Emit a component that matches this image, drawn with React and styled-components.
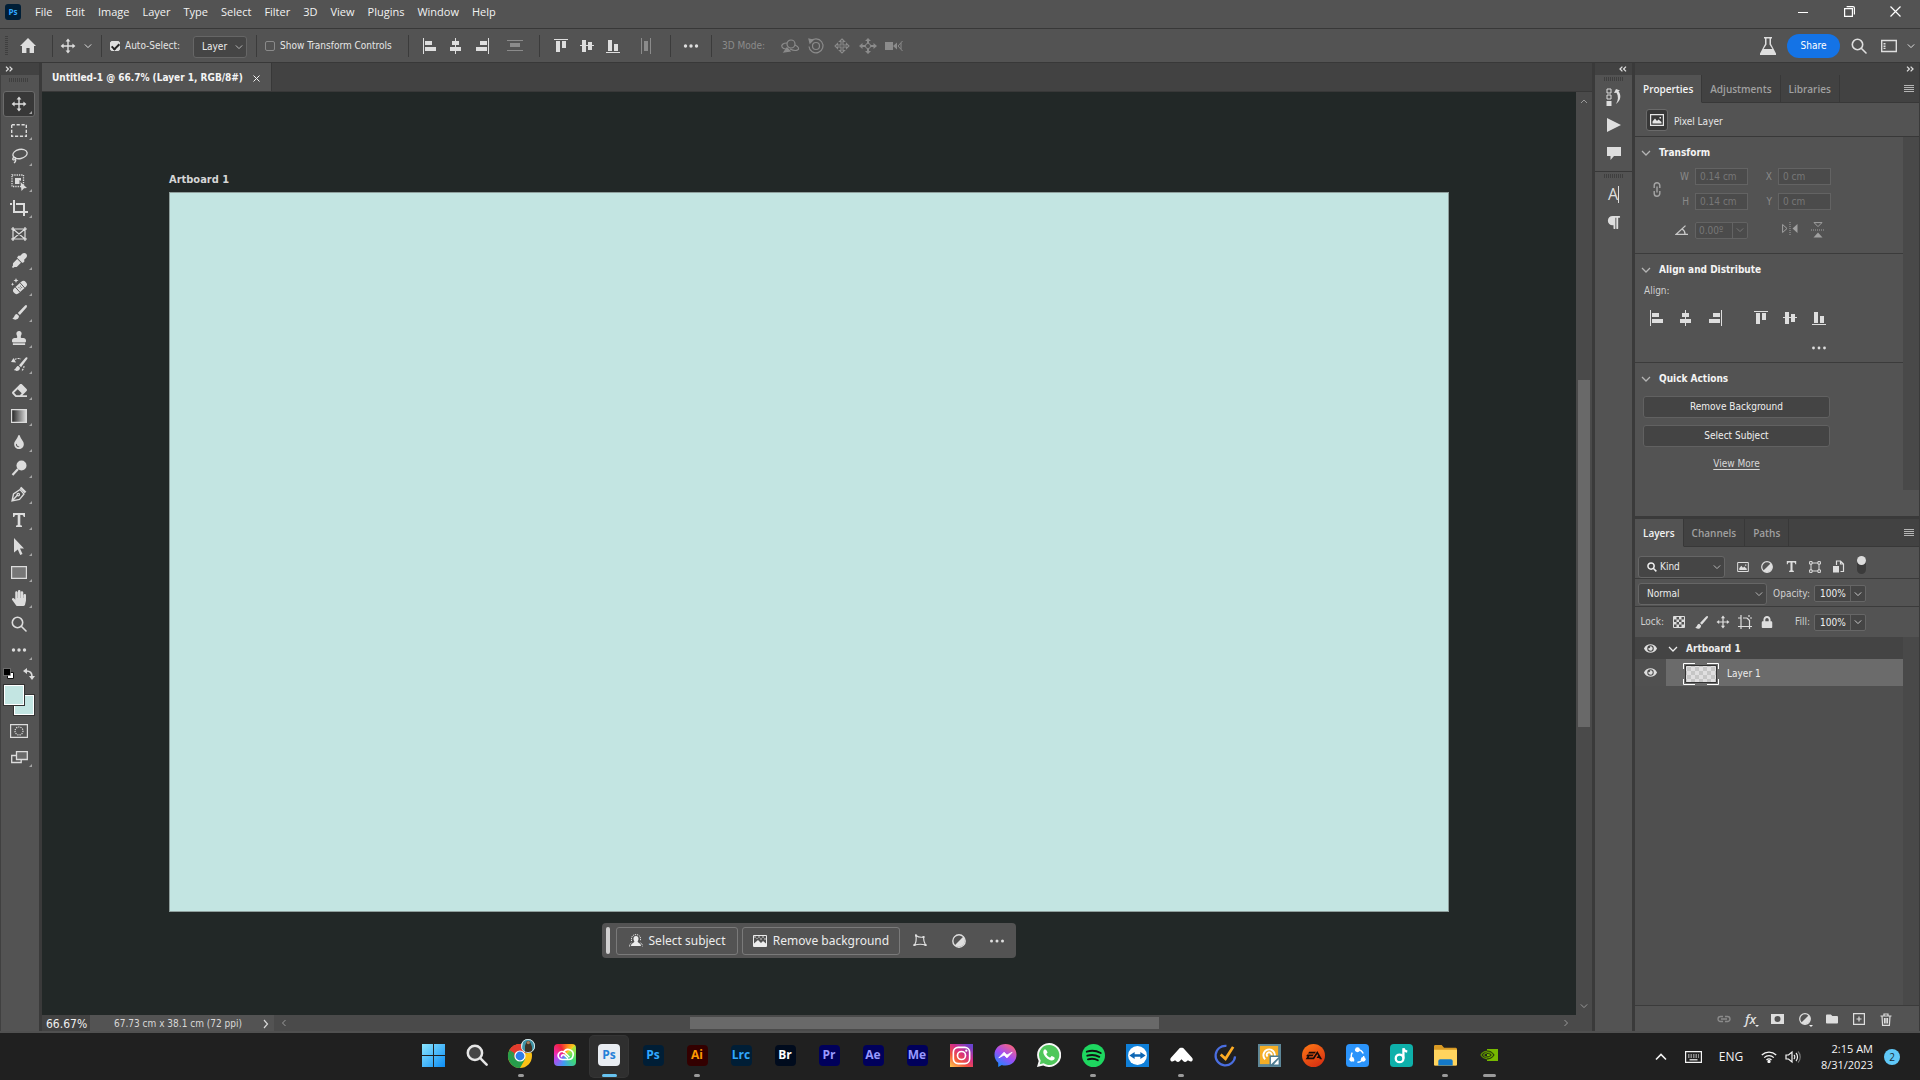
import React from "react";
import styled, { createGlobalStyle } from "styled-components";
import {
  FaEraser,
  FaEye,
  FaEyeDropper,
  FaFolder,
  FaHandPaper,
  FaLock,
  FaParagraph,
  FaStamp,
  FaTint,
} from "react-icons/fa";

const GlobalStyle = createGlobalStyle`
  * {
    box-sizing: border-box;
  }
  body {
    margin: 0;
    background: #202020;
    color: #e6e6e6;
    font-family: "DejaVu Sans Condensed", "DejaVu Sans", sans-serif;
    font-size: 10px;
    line-height: 14px;
  }
  button,
  input,
  select {
    margin: 0;
    padding: 0;
    border: 0;
    background: none;
    color: inherit;
    font: inherit;
  }
  svg {
    display: block;
    flex: none;
  }
`;

/* ---------- icons ---------- */

const Icon = ({ w = 16, h = 16, children, ...rest }) => (
  <svg width={w} height={h} viewBox={`0 0 ${w} ${h}`} fill="currentColor" aria-hidden="true" {...rest}>
    {children}
  </svg>
);

const Line = ({ w = 16, h = 16, sw = 1.4, children }) => (
  <Icon w={w} h={h} fill="none" stroke="currentColor" strokeWidth={sw}>
    {children}
  </Icon>
);

const ChevronDown = ({ w = 8 }) => (
  <svg width={w} height={w} viewBox="0 0 8 8" fill="none" stroke="currentColor" aria-hidden="true">
    <path d="M.8 2.4L4 5.6l3.2-3.2" />
  </svg>
);

const Double = ({ left }) => (
  <Line w={8} h={6} sw={1.3}>
    <path d={left ? "M3.4.6L1 3l2.4 2.4M7 .6L4.6 3 7 5.4" : "M1 .6L3.4 3 1 5.4M4.6.6L7 3 4.6 5.4"} />
  </Line>
);

const Move = ({ w = 16 }) => (
  <svg width={w} height={w} viewBox="0 0 16 16" fill="currentColor" aria-hidden="true">
    <path d="M8 .6l2.4 3H8.7v3.7h3.7V5.6l3 2.4-3 2.4V8.7H8.7v3.7h1.7l-2.4 3-2.4-3h1.700V8.7H3.6v1.7L.6 8l3-2.4v1.700h3.700V3.6H5.6z" />
  </svg>
);

const Home = () => (
  <Icon w={16} h={15}>
    <path d="M8 0L0 8h2v7h4.4v-5h3.2v5H14V8h2z" />
  </Icon>
);

const AlignLeft = () => (
  <Icon w={14} h={16}>
    <path d="M0 0h1v16H0zM2 3h7v4H2zM2 9h11v4H2z" />
  </Icon>
);
const AlignCenter = () => (
  <Icon w={12} h={16}>
    <path d="M5 0h1v16H5zM2 3h7v4H2zM0 9h11v4H0z" />
  </Icon>
);
const AlignRight = () => (
  <Icon w={14} h={16}>
    <path d="M13 0h1v16h-1zM5 3h7v4H5zM1 9h11v4H1z" />
  </Icon>
);
const AlignTop = () => (
  <Icon w={14} h={14}>
    <path d="M0 0h14v1H0zM2 2h4v11H2zM8 2h4v7H8z" />
  </Icon>
);
const AlignMiddle = () => (
  <Icon w={14} h={12}>
    <path d="M0 5h14v1H0zM2 0h4v12H2zM8 2h4v8H8z" />
  </Icon>
);
const AlignBottom = () => (
  <Icon w={14} h={14}>
    <path d="M0 13h14v1H0zM2 1h4v11H2zM8 5h4v7H8z" />
  </Icon>
);
const SpreadV = () => (
  <Icon w={16} h={11}>
    <path d="M0 0h16v1H0zM3 3h10v4H3zM0 10h16v1H0z" />
  </Icon>
);
const SpreadH = () => (
  <Icon w={10} h={16}>
    <path d="M0 0h1v16H0zM3 3h4v10H3zM9 0h1v16H9z" />
  </Icon>
);
const Dots = ({ r = 1.7 }) => (
  <Icon w={16} h={6}>
    <circle cx="2.5" cy="3" r={r} />
    <circle cx="8" cy="3" r={r} />
    <circle cx="13.5" cy="3" r={r} />
  </Icon>
);

const Orbit3D = () => (
  <Line w={20} h={16} sw={1.2}>
    <circle cx="11" cy="6" r="4" />
    <path d="M7 5C3 5 1 7 2 9s2.5 2 4 2M15 7c4 2 4.5 4 2.5 5S12 12 10 11" />
    <path d="M4 14l3-4 3 3z" fill="currentColor" />
  </Line>
);
const Roll3D = () => (
  <Line w={18} h={18} sw={1.2}>
    <circle cx="9" cy="9" r="3.5" />
    <path d="M3.5 4.5A7 7 0 1 1 2 9.5" />
    <path d="M2 2l4 1-3 3z" fill="currentColor" />
  </Line>
);
const Pan3D = () => (
  <Line w={16} h={16} sw={1.1}>
    <path d="M8 1l2.5 2.5H9V7h3.5V5.5L15 8l-2.5 2.5V9H9v3.5h1.5L8 15l-2.5-2.5H7V9H3.5v1.5L1 8l2.5-2.5V7H7V3.5H5.5z" />
  </Line>
);
const Slide3D = () => (
  <Icon w={18} h={16}>
    <path d="M9 0l3 3h-2v2H8V3H6zM9 16l-3-3h2v-2h2v2h2zM0 8l3.5-3v2H6v2H3.5v2zM18 8l-3.5-3v2H12v2h2.5v2z" />
    <circle cx="9" cy="8" r="2.6" fill="none" stroke="currentColor" />
  </Icon>
);
const Zoom3D = () => (
  <Icon w={18} h={12}>
    <path d="M0 2h8v8H0zM8 6l4-3.5v7z" />
    <path d="M17.5 1L13 6l4.5 5M16 3v6" fill="none" stroke="currentColor" />
  </Icon>
);
const Flask = () => (
  <Icon w={16} h={18}>
    <path d="M4 0h8v1.6h-1V7l5 9.500V18H0v-1.500L5 7V1.600H4zM6.500 1.600v6L3.600 12h8.800L9.500 7.600v-6z" fillRule="evenodd" />
  </Icon>
);
const Magnifier = ({ w = 16, sw = 1.6, fill = "none" }) => (
  <svg width={w} height={w} viewBox="0 0 16 16" fill="none" stroke="currentColor" strokeWidth={sw} aria-hidden="true">
    <circle cx="6.5" cy="6.5" r="5.2" fill={fill} />
    <path d="M10.5 10.5l4.5 4.5" strokeLinecap="round" />
  </svg>
);
const Workspace = () => (
  <Line w={16} h={14} sw={1.4}>
    <path d="M.7 1.5h14.600v11H.7z" />
    <path d="M3.5 4v6" strokeWidth="2" strokeDasharray="1.6 .8" />
  </Line>
);
const Burger = () => (
  <Icon w={10} h={8}>
    <path d="M0 0h10v1H0zM0 2h10v1H0zM0 4h10v1H0zM0 6h10v1H0z" />
  </Icon>
);

const Marquee = () => (
  <Line w={16} h={13}>
    <path d="M.7.7h14.600v11.600H.7z" strokeDasharray="3.2 1.7" />
  </Line>
);
const LassoTool = () => (
  <Line w={17} h={16} sw={1.3}>
    <ellipse cx="9" cy="6" rx="7.2" ry="4.6" transform="rotate(-12 9 6)" />
    <path d="M3.2 9.5c-2 .3-2 2.7 0 2.4s2.2-2.6 0-2.4M4.5 11c.6 1.5-.2 3-1.5 4" />
  </Line>
);
const ObjectSelect = () => (
  <Icon w={17} h={17}>
    <path d="M1 1h11.500v11.500H1z" fill="none" stroke="currentColor" strokeWidth="1.3" strokeDasharray="1.3 1" />
    <path d="M4 4h6v3L8.500 6v4H4zM9.500 8l6.500 6-3 .2L10.500 17z" />
  </Icon>
);
const Crop = () => (
  <Line w={18} h={16} sw={2}>
    <path d="M4 0v12h9M6 4h8v12M0 4h2M14 12h4" />
  </Line>
);
const Frame = () => (
  <Line w={16} h={14} sw={1.2}>
    <path d="M2 2h12v10H2zM2 2l12 10M14 2L2 12" />
    <path d="M0 2h3M13 2h3M0 12h3M13 12h3M2 0v3M14 0v3M2 11v3M14 11v3" />
  </Line>
);
const HealingBrush = () => (
  <Icon w={17} h={17}>
    <g transform="rotate(-42 9 9.500)">
      <rect x="1" y="6" width="16" height="7" rx="3.5" />
      <path d="M5.800 6v7M12.200 6v7" stroke="#535353" strokeWidth=".9" />
      <path d="M7.800 8.300h.9v.9h-.9zM9.800 8.300h.9v.9h-.9zM7.800 10.200h.9v.9h-.9zM9.800 10.200h.9v.9h-.9z" fill="#535353" />
    </g>
    <path d="M5 0l.7 1.800L7.500 2.500l-1.800.7L5 5l-.7-1.800L2.500 2.500l1.800-.7zM1.500 4.500l.5 1.300 1.200.5-1.200.5-.5 1.200L1 6.800l-1-.5 1-.5z" />
  </Icon>
);
const Brush = ({ w = 15 }) => (
  <svg width={w} height={w} viewBox="0 0 15 15" fill="currentColor" aria-hidden="true">
    <path d="M14.700.4c-.5-.6-1.300-.3-1.900.3L5.800 8l2.100 2.100 6.600-7.700c.5-.6.600-1.500.2-2zM4.900 8.900C2.300 8.800 3 12.200.3 13.300c1.800 2.200 6.800 1.900 6.700-2.300z" />
  </svg>
);
const HistoryBrush = () => (
  <Icon w={17} h={17}>
    <path d="M16.300 1.500c-.6-.7-1.300-.3-1.800.3L8 9.300l2 2 6-8c.5-.6.700-1.300.3-1.800zM7.300 10c-2.300 0-2 2.700-4.300 3.800 1.500 2 6 1.600 6-2z" />
    <path d="M1.500 5.500C4 2.500 7 2 10 3M13 10c0 2-1 4-3 5" fill="none" stroke="currentColor" strokeWidth="1.1" strokeDasharray="2 1" />
    <path d="M0 6l2.500-4L5 6.500z" />
  </Icon>
);
const Gradient = () => (
  <Icon w={16} h={14}>
    <defs>
      <linearGradient id="toolGradient">
        <stop offset="0" stopColor="#222" />
        <stop offset="1" stopColor="#ddd" />
      </linearGradient>
    </defs>
    <path d="M.6.6h14.800v12.800H.6z" fill="url(#toolGradient)" stroke="currentColor" strokeWidth="1.2" />
  </Icon>
);
const Dodge = () => (
  <Icon w={16} h={16}>
    <circle cx="10.5" cy="5.5" r="5" />
    <path d="M7 9l-5.500 6" stroke="currentColor" strokeWidth="2.2" />
  </Icon>
);
const Pen = () => (
  <Line w={16} h={16} sw={1.3}>
    <path d="M1 15l1.500-7L9 3.500 13 8l-4.500 5.500zM1 15l5.500-6" />
    <circle cx="7.3" cy="8.6" r="1.2" />
    <path d="M9.500 1.500l5 5" strokeWidth="2.4" />
  </Line>
);
const TypeTool = ({ w = 14 }) => (
  <svg width={w} height={w} viewBox="0 0 14 14" fill="currentColor" aria-hidden="true">
    <path d="M1 0h12v4h-1.300c-.2-1.500-.8-2-2.200-2H8.300v9.500c0 .7.500.9 1.700 1V14H4v-1.500c1.200-.1 1.700-.3 1.700-1V2H4.500c-1.400 0-2 .5-2.200 2H1z" />
  </svg>
);
const Arrow = () => (
  <Icon w={12} h={17}>
    <path d="M1 0l10 10.500H7L9.500 16l-2.300 1-2.400-5.500L1 14.500z" />
  </Icon>
);
const RectTool = () => (
  <Icon w={16} h={13}>
    <path d="M.6.6h14.800v11.800H.6z" fill="#777" stroke="currentColor" strokeWidth="1.2" />
  </Icon>
);
const QuickMask = () => (
  <Line w={18} h={14} sw={1.2}>
    <path d="M.6.6h16.800v12.800H.6z" />
    <circle cx="9" cy="7" r="4" strokeDasharray="1.2 1" />
  </Line>
);
const ScreenMode = () => (
  <Icon w={17} h={13} fill="none" stroke="currentColor" strokeWidth="1.3">
    <path d="M.7 4.500h9.500v7H.7z" />
    <path d="M5.500.7h10.800v7.800H5.500z" fill="#6a6a6a" />
  </Icon>
);
const Reset = () => (
  <Icon w={12} h={12}>
    <path d="M4.500 4.500h6v6h-6z" fill="#fff" stroke="#111" />
    <path d="M.5.5h7v7h-7z" fill="#000" stroke="#999" strokeWidth=".6" />
  </Icon>
);
const Swap = () => (
  <Icon w={12} h={12}>
    <path d="M3.500 3C7 3 9 5 9 8.500" fill="none" stroke="currentColor" strokeWidth="1.6" />
    <path d="M0 3l4-3v6zM9 12L6 8h6z" />
  </Icon>
);

const History = () => (
  <Icon w={16} h={18}>
    <path d="M1 1h4v4H1zM1 7h4v4H1z" fill="none" stroke="currentColor" />
    <path d="M.5 13h5v5h-5zM8 5l2-4 4 1.500-1.500.8c3 4 2.500 9.200-2.500 12.700 2.500-4 2.500-8 .5-11.300z" />
  </Icon>
);
const Play = () => (
  <Icon w={14} h={14}>
    <path d="M0 0l14 7-14 7z" />
  </Icon>
);
const Comment = () => (
  <Icon w={14} h={13}>
    <path d="M0 0h14v9H7l-3.500 4V9H0z" />
  </Icon>
);

const Picture = ({ w = 14, h = 12 }) => (
  <svg width={w} height={h} viewBox="0 0 14 12" aria-hidden="true">
    <path d="M.6.6h12.800v10.800H.6z" fill="none" stroke="currentColor" strokeWidth="1.2" />
    <path d="M2.500 9.500V7.500L5 4.500 7 7l1.500-1.500 3 2.500v1.500z" fill="currentColor" />
    <path d="M9.500 3h1.500v1.500H9.500z" fill="currentColor" />
  </svg>
);
const Chain = ({ side }) => (
  <Icon w={side ? 14 : 8} h={side ? 8 : 15} fill="none" stroke="currentColor" strokeWidth="1.4">
    {side ? (
      <path d="M6 6.500H3.500a2.500 2.500 0 0 1 0-5H6M8 1.500h2.500a2.500 2.500 0 0 1 0 5H8M4 4h6" />
    ) : (
      <path d="M1.200 6V3.500a2.800 2.800 0 0 1 5.600 0V6M1.200 9v2.500a2.800 2.800 0 0 0 5.600 0V9M4 4.500v6" />
    )}
  </Icon>
);
const Angle = () => (
  <Line w={14} h={10} sw={1.3}>
    <path d="M10.500.6L1.200 9.300H13M7 4c2 1 3 3 3 5" />
  </Line>
);
const FlipH = () => (
  <Icon w={16} h={13}>
    <path d="M.6 2.500L5 6.500.6 10.500z" fill="none" stroke="currentColor" />
    <path d="M15.500 2v9L10.500 6.500z" />
    <path d="M8 0v13" stroke="currentColor" strokeDasharray="1 1" />
  </Icon>
);
const FlipV = () => (
  <Icon w={14} h={16}>
    <path d="M3 .6h8L7 4.600z" fill="none" stroke="currentColor" />
    <path d="M2.500 15.500h9L7 10.500z" />
    <path d="M0 8h14" stroke="currentColor" strokeDasharray="1 1" />
  </Icon>
);
const HalfCircle = ({ w = 12 }) => (
  <svg width={w} height={w} viewBox="0 0 12 12" aria-hidden="true">
    <circle cx="6" cy="6" r="5.3" fill="none" stroke="currentColor" strokeWidth="1.2" />
    <path d="M9.800 2.200A5.400 5.400 0 0 1 2.200 9.800z" fill="currentColor" />
  </svg>
);
const ShapeBox = () => (
  <Icon w={12} h={12} fill="none" stroke="currentColor">
    <path d="M2 2h8v8H2z" />
    <path d="M.6.6h2.500v2.500H.6zM8.900.6h2.500v2.500H8.900zM.6 8.900h2.500v2.500H.6zM8.900 8.900h2.500v2.500H8.900z" fill="#535353" />
  </Icon>
);
const SmartDoc = () => (
  <Icon w={12} h={13}>
    <path d="M3.500 5V1h4L10.500 4v7.500H7.500M7.500 1v3h3" fill="none" stroke="currentColor" strokeWidth="1.2" />
    <path d="M0 6h6v6.500H0z" />
  </Icon>
);
const Checker = () => (
  <Icon w={12} h={12}>
    <path d="M.5.5h11v11H.5z" fill="none" stroke="currentColor" />
    <path d="M1 1h2.500v2.500H1zM6 1h2.500v2.500H6zM3.500 3.500H6V6H3.500zM8.500 3.500H11V6H8.500zM1 6h2.500v2.500H1zM6 6h2.500v2.500H6zM3.500 8.500H6V11H3.500zM8.500 8.500H11V11H8.500z" />
  </Icon>
);
const ArtboardLock = () => (
  <Line w={14} h={14} sw={1.2}>
    <path d="M3 0v14M0 3h3M5 3h4M11.500 5v9M0 11.500h14M9 3l2.500 2.500M11 0v2M12 3h2" />
  </Line>
);
const Mask = () => (
  <Icon w={13} h={10}>
    <path d="M0 0h13v10H0zM6.500 2a3 3 0 1 0 0 6 3 3 0 0 0 0-6z" fillRule="evenodd" />
  </Icon>
);
const PlusBox = () => (
  <Line w={12} h={12} sw={1.2}>
    <path d="M.6.6h10.800v10.800H.6zM6 3.500v5M3.500 6h5" />
  </Line>
);
const Trash = () => (
  <Line w={12} h={13} sw={1.2}>
    <path d="M.5 3h11M2 3l.6 9.400h6.800L10 3M4 3V1h4v2M4.500 5v5.500M6 5v5.500M7.500 5v5.500" />
  </Line>
);
const Person = () => (
  <Icon w={14} h={13}>
    <path d="M7 2c2 0 2.600 1.500 2.500 3-.1 1.200-.7 1.700-.9 2.500.3 1.500 3.400 1.500 3.400 4.500H2c0-3 3.100-3 3.400-4.500-.2-.8-.8-1.300-.9-2.500C4.400 3.500 5 2 7 2z" />
    <path d="M.6 12.500c0-2 .4-3 1.900-3.600M2.500 7V4C3 1.500 5 .6 7 .6S11 1.500 11.500 4v3M11.500 8.900c1.500.6 1.900 1.600 1.900 3.600" fill="none" stroke="currentColor" strokeWidth=".9" strokeDasharray="1.2 .8" />
  </Icon>
);
const NoBackground = () => (
  <Icon w={14} h={12}>
    <path d="M.5.5h13v11H.5z" fill="none" stroke="currentColor" />
    <path d="M1 11V8.500l4-3.500 3 3 2-2 3 2.500V11z" />
    <path d="M1 1h2v2H1zM5 1h2v2H5zM3 3h2v1H3zM9 1h2v2H9zM11 3h2v2h-2zM7 3h2v2H7z" opacity=".4" />
  </Icon>
);
const Warp = () => (
  <Line w={14} h={13} sw={1.2}>
    <path d="M3 1.500c2 1.500 5 2 7.500 1.500 0 3 .5 5.500 2 8-3.500-1-7-1-11 0C3.500 8 3.500 5 3 1.500z" />
    <path d="M2 .5h2v2H2zM9.500 2h2v2h-2zM11.500 10h2v2h-2zM.5 10h2v2h-2z" fill="currentColor" stroke="none" />
  </Line>
);
const WinClose = () => (
  <Line w={11} h={11} sw={1.2}>
    <path d="M.5.5l10 10M10.500.5l-10 10" />
  </Line>
);
const WinRestore = () => (
  <Line w={11} h={11} sw={1.2}>
    <path d="M.6 2.600h7.800v7.800H.6zM2.600.6H9a1.400 1.400 0 0 1 1.400 1.400v6.400" />
  </Line>
);
const WinMinimize = () => (
  <Icon w={10} h={10}>
    <path d="M0 5h10v1H0z" />
  </Icon>
);

/* ---------- taskbar logos ---------- */

const Logo = ({ size = 23, children }) => (
  <svg width={size} height={size} viewBox="0 0 24 24" aria-hidden="true">
    {children}
  </svg>
);
const Windows = () => (
  <Logo>
    <linearGradient id="win" x2="1" y2="1">
      <stop offset="0" stopColor="#8be6ff" />
      <stop offset="1" stopColor="#0c8df5" />
    </linearGradient>
    <path d="M0 0h11.500v11.500H0zM12.500 0H24v11.500H12.500zM0 12.500h11.500V24H0zM12.500 12.500H24V24H12.500z" fill="url(#win)" />
  </Logo>
);
const Chrome = () => (
  <svg width="28" height="32" viewBox="0 0 28 32" aria-hidden="true">
    <circle cx="13" cy="17" r="12" fill="#fbc116" />
    <path d="M13 17L2.600 11A12 12 0 0 1 23.400 11z" fill="#e33b2e" />
    <path d="M2.600 11A12 12 0 0 0 13 29l5.200-9L13 17z" fill="#269e4b" />
    <path d="M2.600 11A12 12 0 0 1 13 5v8L8 20z" fill="#e33b2e" />
    <path d="M2.600 11L8 20l-1-6z" fill="#269e4b" />
    <circle cx="13" cy="17" r="5.6" fill="#fff" />
    <circle cx="13" cy="17" r="4.4" fill="#2f7de9" />
    <circle cx="21" cy="7" r="7" fill="#b5d8dd" />
    <path d="M16 2.500C18 0 24 0 26 3l1.500 4c0 3-2 5-4 6.300L19 14l-4-4z" fill="#3f93a6" />
    <path d="M18 14V7l1-3 1-2h2.500L24 5l1 3v4.500c-1.500 1.300-5 2-7 1.500z" fill="#3d3327" />
    <circle cx="21.3" cy="3.600" r="1.7" fill="#a77d5b" />
    <circle cx="21" cy="7" r="6.600" fill="none" stroke="#dcecef" strokeWidth=".8" />
  </svg>
);
const CloudLoops = () => (
  <Icon w={18} h={18} fill="none" stroke="#fff" strokeWidth="1.6" strokeLinecap="round">
    <path d="M6 13.500a4 4 0 1 1 3-6.800l4 4M12 13.500a5 5 0 1 0-4.400-7M6 13.500h6M5.500 10.500a1.800 1.800 0 0 1 2.600-1.500l3.400 3" />
  </Icon>
);
const Instagram = () => (
  <Logo>
    <linearGradient id="insta" x1="0" y1="1" x2=".8" y2="0">
      <stop offset="0" stopColor="#ffcb52" />
      <stop offset=".35" stopColor="#f4563a" />
      <stop offset=".65" stopColor="#d32e86" />
      <stop offset="1" stopColor="#6a43ce" />
    </linearGradient>
    <path d="M0 0h24v24H0z" fill="url(#insta)" />
    <rect x="3.5" y="3.5" width="17" height="17" rx="5" fill="none" stroke="#fff" strokeWidth="1.7" />
    <circle cx="12" cy="12" r="4.2" fill="none" stroke="#fff" strokeWidth="1.7" />
    <circle cx="17" cy="7" r="1.2" fill="#fff" />
  </Logo>
);
const Messenger = () => (
  <Logo>
    <linearGradient id="msgr" x1=".8" y1="0" x2=".2" y2="1">
      <stop offset="0" stopColor="#ff6674" />
      <stop offset=".5" stopColor="#a04cf6" />
      <stop offset="1" stopColor="#158bff" />
    </linearGradient>
    <path d="M12 0C5.300 0 .5 4.800.5 11.200c0 3.500 1.500 6.300 3.900 8.300V24l3.700-2.200c1.200.4 2.500.6 3.900.6 6.700 0 11.500-4.800 11.500-11.200S18.700 0 12 0z" fill="url(#msgr)" />
    <path d="M5 14.500l5.500-6 3 3 5.500-3-5.500 6-3-3z" fill="#fff" stroke="#fff" strokeWidth=".8" />
  </Logo>
);
const WhatsApp = () => (
  <Logo size={24}>
    <path d="M12 0a12 12 0 0 0-10.300 18L0 24l6.200-1.600A12 12 0 1 0 12 0z" fill="#f6f6f6" />
    <path d="M12 2a10 10 0 0 0-8.300 15.500L2.800 21.200l3.800-1A10 10 0 1 0 12 2z" fill="#4fc75b" />
    <path d="M8 6.300c-.5 0-1.700.9-1.700 2.700 0 3.600 4.800 8.400 8.400 8.400 1.800 0 3-1.300 3-2.500 0-.5-2.500-1.800-3-1.800s-1 1.500-1.500 1.500c-1.200 0-3.700-2.300-3.900-3.500 0-.5 1.200-1.200 1.200-1.700S9 6.300 8 6.300z" fill="#fff" />
  </Logo>
);
const Spotify = () => (
  <Logo>
    <circle cx="12" cy="12" r="12" fill="#1ed760" />
    <path d="M5 8c5-1.500 10-1 14.500 1.400M5.500 12.200c4.300-1.300 8.800-.9 12.500 1.200M6.200 16c3.700-1 7.400-.7 10.300 1" fill="none" stroke="#111" strokeWidth="2" strokeLinecap="round" />
  </Logo>
);
const TeamViewer = () => (
  <Logo>
    <path d="M0 0h24v24H0z" fill="#0f7fd8" />
    <circle cx="12" cy="12" r="9.8" fill="#fff" />
    <path d="M3.500 12l5.500-3.600v2.400h6V8.400l5.500 3.600-5.500 3.600v-2.400H9v2.400z" fill="#0d66b4" />
  </Logo>
);
const Peaks = () => (
  <Logo>
    <path d="M1.200 14L9 5.500c1.500-2 4.500-2 6 0L22.800 14c2.400 2.500-.3 5.500-2.800 3.800L18.700 17l-1.200 1c-1.200 1-2.500 1-3.500 0l-2-2-2 2c-1 1-2.300 1-3.500 0l-1.200-1-1.300.8c-2.500 1.700-5.200-1.300-2.800-3.800z" fill="#fff" />
  </Logo>
);
const TickTick = () => (
  <Logo>
    <path d="M13 2A10.200 10.200 0 1 0 22 13" fill="none" stroke="#4a6ee0" strokeWidth="2.3" />
    <path d="M7 11l5 4.500L20 3" fill="none" stroke="#fdac24" strokeWidth="2.9" />
  </Logo>
);
const Podcast = () => (
  <Logo>
    <path d="M0 0h24v24H0z" fill="#5d8798" />
    <path d="M2 2h19v19H2z" fill="#f5ae26" />
    <path d="M7.500 16a6 6 0 1 1 10-3M10 13a2.500 2.500 0 1 1 4-1" fill="none" stroke="#fff" strokeWidth="2" />
    <path d="M12 12h11v11H12z" fill="#4d7c92" />
    <path d="M21.500 13.500l-8 8v-8zM21.500 16v5.500h-5z" fill="#fff" />
  </Logo>
);
const EaBase = () => (
  <Logo>
    <linearGradient id="ea" x2=".6" y2="1">
      <stop offset="0" stopColor="#ff7a15" />
      <stop offset="1" stopColor="#d93412" />
    </linearGradient>
    <circle cx="12" cy="12" r="12" fill="url(#ea)" />
    <path d="M7.500 8h7l-1.200 1.800H6.300zM5.500 11h6.800l-1.200 1.800H7.800L7 14.200h4.500l4.500-7 5 8.800h-2.300l-.8-1.500h-2.700l1-1.700h.8L16 10.500 12.500 16H3.800l2-3.200H4.300z" fill="#160b08" />
  </Logo>
);
const ShareIt = () => (
  <Logo>
    <rect width="24" height="24" rx="4" fill="#2b94fb" />
    <circle cx="12" cy="12.5" r="6.5" fill="none" stroke="#fff" strokeWidth="1.5" strokeDasharray="10 3.6" />
    <circle cx="12" cy="6" r="2.5" fill="#fff" />
    <circle cx="6" cy="16" r="2.5" fill="#fff" />
    <circle cx="18" cy="16" r="2.5" fill="#fff" />
  </Logo>
);
const MusicNote = () => (
  <Logo>
    <rect width="24" height="24" rx="4" fill="#0eb0aa" />
    <circle cx="10" cy="15" r="4" fill="none" stroke="#fff" strokeWidth="2.4" />
    <path d="M14 15V4.500c.5 2 1.500 3 4 3.500" fill="none" stroke="#fff" strokeWidth="2.4" />
  </Logo>
);
const Explorer = () => (
  <Logo>
    <path d="M0 2.500C0 1.500.8 1 1.500 1H8l2.500 3H22c1 0 2 .5 2 1.500V21c0 1-.5 1.500-1.500 1.500h-21C.5 22.500 0 22 0 21z" fill="#d99a24" />
    <path d="M0 6h24v15c0 1-.5 1.500-1.500 1.500h-21C.5 22.500 0 22 0 21z" fill="#ffd45e" />
    <path d="M4.500 22.500V18c0-1.200.8-2 2-2h11c1.200 0 2 .8 2 2v4.500z" fill="#1379c9" />
  </Logo>
);
const Nvidia = () => (
  <svg width="18" height="14" viewBox="0 0 18 14" aria-hidden="true">
    <path d="M7 1h11v12H7z" fill="#77b900" />
    <path d="M1 7c2-4 9-5.500 13 0-3 5-10 5-13 0zM3.500 7c2-3 6-3 8.500 0-2.500 3-6.500 3-8.500 0z" fill="none" stroke="#5c8f00" strokeWidth="1.3" />
    <path d="M7 3c3-.3 5.500 1.500 7 4-1.500 2.500-4 4-7 4M7 5.500c1.800 0 3 .5 4 1.500-1 1.200-2.200 1.800-4 1.800" fill="none" stroke="#25360a" />
  </svg>
);

/* ---------- shell ---------- */

const Page = styled.div`
  display: flex;
  flex-direction: column;
  min-height: 100vh;
  background: #202020;
`;

const TitleBar = styled.header`
  display: flex;
  align-items: center;
  height: 29px;
  padding: 0 2px 5px 5px;
  border-bottom: 1px solid #383838;
  background: #535353;
`;

const Badge = styled.span`
  display: grid;
  place-items: center;
  width: ${(p) => p.$size}px;
  height: ${(p) => p.$size}px;
  border-radius: ${(p) => (p.$size > 18 ? 4 : 3)}px;
  background: ${(p) => p.$bg};
  color: ${(p) => p.$fg};
  font: 700 ${(p) => (p.$size > 18 ? 12 : 8)}px/16px "Open Sans", sans-serif;
`;

const Menus = styled.nav`
  display: flex;
  gap: 13px;
  margin-left: 14px;
`;

const MenuButton = styled.button`
  color: #f2f2f2;
  font: 11px/16px "Open Sans", sans-serif;
`;

const WindowButtons = styled.div`
  display: flex;
  margin-left: auto;
  button {
    display: grid;
    place-items: center;
    width: 46px;
    height: 20px;
    color: #fff;
  }
`;

const OptionsBar = styled.div`
  display: flex;
  align-items: center;
  height: 34px;
  padding: 0 1px 0 5px;
  border-bottom: 1px solid #383838;
  background: #535353;
`;

const Grip = styled.span`
  width: ${(p) => (p.$wide ? 20 : 3)}px;
  height: ${(p) => (p.$wide ? 4 : 19)}px;
  background: repeating-linear-gradient(
    ${(p) => (p.$wide ? "90deg" : "180deg")},
    #3f3f3f 0 1px,
    transparent 1px 2px
  );
`;

const Cell = styled.button`
  position: relative;
  display: grid;
  place-items: center;
  flex: none;
  width: ${(p) => p.$w || 26}px;
  height: ${(p) => p.$h || 26}px;
  color: ${(p) => (p.$dim ? "#8b8b8b" : "#dedede")};
  &::after {
    content: "";
    display: ${(p) => (p.$menu ? "block" : "none")};
    position: absolute;
    right: 5px;
    bottom: 5px;
    border: 2px solid transparent;
    border-top-color: #eee;
    border-bottom: 0;
  }
`;

const Rule = styled.span`
  width: 1px;
  height: 22px;
  margin: 0 4px;
  background: #3b3b3b;
`;

const AlignGroup = styled.div`
  display: flex;
  align-items: center;
  padding-left: 4px;
`;

const Check = styled.label`
  display: flex;
  align-items: center;
  gap: 5px;
  width: ${(p) => p.$w}px;
  padding-left: 4px;
  white-space: nowrap;
  input {
    display: grid;
    place-items: center;
    width: 10px;
    height: 10px;
    border: 1px solid #8a8a8a;
    border-radius: 2px;
    appearance: none;
  }
  input:checked {
    border-color: #dedede;
    background: #dedede;
  }
  input:checked::after {
    content: "";
    width: 3px;
    height: 6px;
    margin-bottom: 2px;
    border: solid #222;
    border-width: 0 2px 2px 0;
    transform: rotate(45deg);
  }
`;

const TargetSlot = styled.div`
  padding: 3px 5px 0 0;
`;

const Picker = styled.span`
  display: grid;
  align-items: center;
  width: ${(p) => p.$w}px;
  height: ${(p) => p.$h || 22}px;
  border: 1px solid #666;
  border-radius: 3px;
  background: #454545;
  select,
  svg {
    grid-area: 1 / 1;
  }
  select {
    width: 100%;
    padding-left: ${(p) => p.$pad || 8}px;
    color: #ececec;
    appearance: none;
    outline: 0;
  }
  svg {
    justify-self: end;
    margin-right: 3px;
    pointer-events: none;
    color: #b5b5b5;
  }
  svg.lead {
    justify-self: start;
    margin-left: 8px;
    color: #eee;
  }
`;

const ModeLabel = styled.span`
  width: 61px;
  padding-left: 6px;
  color: #8b8b8b;
`;

const OptionsEnd = styled.div`
  display: flex;
  align-items: center;
  margin-left: auto;
`;

const ShareButton = styled.button`
  width: 53px;
  height: 24px;
  margin-right: 3px;
  border-radius: 12px;
  background: #1473e6;
  color: #fff;
`;

const Workarea = styled.main`
  display: flex;
  flex: 1;
  gap: 3px;
  padding-right: 1px;
  border-bottom: 2px solid #505050;
  background: #3a3a3a;
`;

const Column = styled.div`
  display: flex;
  flex-direction: column;
  width: ${(p) => p.$w}px;
`;

const Collapse = styled.button`
  display: flex;
  align-items: center;
  justify-content: ${(p) => p.$side || "flex-end"};
  height: 12px;
  padding: 0 5px;
  background: #424242;
  color: #ddd;
`;

/* ---------- tools ---------- */

const Tools = styled.div`
  display: flex;
  flex: 1;
  flex-direction: column;
  align-items: center;
  padding-right: 2px;
  border-left: 1px solid #404040;
  background: #535353;
`;

const GripRow = styled.div`
  display: flex;
  justify-content: center;
  align-items: center;
  height: ${(p) => p.$h}px;
`;

const ToolButton = styled.button`
  position: relative;
  display: grid;
  place-items: center;
  width: 32px;
  height: 26px;
  border: 1px solid ${(p) => (p.$active ? "#6b6b6b" : "transparent")};
  border-radius: 3px;
  background: ${(p) => (p.$active ? "#383838" : "none")};
  color: #dcdcdc;
  &::after {
    content: "";
    display: ${(p) => (p.$plain ? "none" : "block")};
    position: absolute;
    right: 2px;
    bottom: 2px;
    border-left: 3px solid transparent;
    border-bottom: 3px solid #a5a5a5;
  }
`;

const SwapRow = styled.div`
  display: flex;
  justify-content: space-between;
  align-items: center;
  width: 32px;
  height: 22px;
  color: #dcdcdc;
`;

const Swatches = styled.div`
  display: grid;
  grid-template-columns: 10px 10px 10px;
  grid-template-rows: 10px 10px 10px;
  margin-bottom: 3px;
`;

const Swatch = styled.button`
  z-index: ${(p) => (p.$front ? 1 : 0)};
  grid-area: ${(p) => (p.$front ? "1 / 1 / 3 / 3" : "2 / 2 / 4 / 4")};
  border: 1px solid #fff;
  outline: 1px solid #333;
  background: #c3e5e2;
`;

/* ---------- document ---------- */

const Document = styled.section`
  display: flex;
  flex: 1;
  flex-direction: column;
  min-width: 0;
`;

const DocTabs = styled.div`
  display: flex;
  height: 29px;
  border-bottom: 1px solid #383838;
  background: #424242;
`;

const DocTab = styled.div`
  display: flex;
  align-items: center;
  gap: 10px;
  padding: 2px 11px 0 10px;
  border-right: 1px solid #383838;
  background: #535353;
  color: #f4f4f4;
  font-weight: bold;
  white-space: nowrap;
`;

const Stage = styled.div`
  display: flex;
  flex: 1;
`;

const Canvas = styled.div`
  display: flex;
  flex: 1;
  flex-direction: column;
  align-items: center;
  padding: 80px 127px 20px;
  background: #222827;
`;

const ArtboardName = styled.div`
  align-self: flex-start;
  margin-bottom: 4px;
  color: #d6d6d6;
  font-weight: bold;
  font-size: 11px;
  line-height: 16px;
`;

const Artboard = styled.div`
  width: 100%;
  aspect-ratio: 16 / 9;
  border: 1px solid #8f9f9d;
  background: #c3e5e2;
`;

const ContextBar = styled.div`
  display: flex;
  align-items: center;
  height: 35px;
  margin-top: 11px;
  padding-left: 4px;
  border-radius: 4px;
  background: #535353;
`;

const Handle = styled.span`
  width: 4px;
  height: 27px;
  margin-right: 6px;
  border-radius: 2px;
  background: #d0d0d0;
`;

const ContextButton = styled.button`
  display: flex;
  justify-content: center;
  align-items: center;
  gap: 6px;
  width: ${(p) => p.$w}px;
  height: 28px;
  margin-right: ${(p) => p.$gap || 0}px;
  border: 1px solid #7a7a7a;
  border-radius: 3px;
  color: #ececec;
  font: 12px/16px "Noto Sans", sans-serif;
  white-space: nowrap;
`;

const VScroll = styled.div`
  display: flex;
  flex-direction: column;
  align-items: center;
  width: 16px;
  padding: 5px 0;
  background: #4a4a4a;
  color: #999;
`;

const Track = styled.div`
  display: flex;
  flex: 1;
  flex-direction: ${(p) => (p.$across ? "row" : "column")};
  &::before {
    content: "";
    flex: ${(p) => p.$before};
  }
  &::after {
    content: "";
    flex: ${(p) => p.$after};
  }
`;

const Thumb = styled.span`
  flex: ${(p) => p.$size};
  min-width: 12px;
  min-height: 12px;
  background: #696969;
`;

const StatusBar = styled.footer`
  display: flex;
  align-items: center;
  height: 16px;
  padding-right: 16px;
  background: #4a4a4a;
  color: #999;
`;

const ZoomInput = styled.input`
  width: 48px;
  height: 16px;
  padding: 2px 0 0 4px;
  background: #434343;
  color: #f0f0f0;
  font-size: 12px;
`;

const DocInfo = styled.div`
  display: flex;
  justify-content: space-between;
  align-items: center;
  width: 184px;
  height: 16px;
  padding: 2px 5px 0 24px;
  background: #535353;
  color: #d8d8d8;
`;

const HScroll = styled.div`
  display: flex;
  flex: 1;
  align-items: center;
  padding: 0 6px;
`;

/* ---------- right side ---------- */

const DockGroup = styled.div`
  display: flex;
  flex-direction: column;
  align-items: center;
  flex: ${(p) => (p.$grow ? 1 : "none")};
  padding-bottom: 4px;
  border-bottom: ${(p) => (p.$grow ? 0 : 1)}px solid #383838;
  background: #535353;
`;

const CharacterMark = styled.span`
  border-right: 1px solid #dedede;
  font: 16px/17px "Open Sans", sans-serif;
`;

const Panel = styled.section`
  display: flex;
  flex-direction: column;
  flex: ${(p) => (p.$grow ? 1 : "none")};
  margin-top: ${(p) => (p.$grow ? 3 : 0)}px;
  background: #535353;
`;

const TabRow = styled.div`
  display: flex;
  height: 28px;
  background: #424242;
`;

const Tab = styled.button`
  padding: 0 8px;
  border-right: 1px solid #383838;
  border-bottom: 1px solid ${(p) => (p.$active ? "#535353" : "#383838")};
  background: ${(p) => (p.$active ? "#535353" : "#424242")};
  color: ${(p) => (p.$active ? "#f4f4f4" : "#a0a0a0")};
  font: 600 10px/14px "Open Sans", sans-serif;
`;

const TabFill = styled.div`
  display: flex;
  flex: 1;
  justify-content: flex-end;
  align-items: center;
  padding-right: 5px;
  border-bottom: 1px solid #383838;
  color: #b5b5b5;
`;

const KindRow = styled.div`
  display: flex;
  align-items: center;
  gap: 6px;
  height: 34px;
  padding-left: 11px;
  border-bottom: 1px solid #383838;
`;

const KindName = styled.span`
  padding-top: 4px;
`;

const KindIcon = styled.span`
  display: grid;
  place-items: center;
  width: 22px;
  height: 22px;
  border: 1px solid #6a6a6a;
  border-radius: 3px;
  background: #383838;
`;

const PanelBody = styled.div`
  display: flex;
`;

const Sections = styled.div`
  flex: 1;
`;

const Gutter = styled.div`
  width: 16px;
  margin-bottom: ${(p) => p.$gap || 0}px;
  background: #494949;
`;

const Section = styled.section`
  height: ${(p) => p.$h}px;
  border-bottom: ${(p) => (p.$last ? 0 : 1)}px solid #3b3b3b;
`;

const SectionTitle = styled.h3`
  display: flex;
  align-items: center;
  gap: 8px;
  height: 30px;
  margin: 0;
  padding: 2px 0 0 6px;
  color: #f4f4f4;
  font-size: 10px;
  svg {
    color: #b5b5b5;
  }
`;

const TransformGrid = styled.div`
  display: grid;
  grid-template-columns: 20px 16px 53px 18px 53px;
  grid-template-rows: 17px 17px 24px;
  gap: 8px 6px;
  align-items: center;
  padding: 1px 0 0 12px;
  color: #8a8a8a;
  label {
    text-align: right;
  }
`;

const LinkSlot = styled.span`
  grid-row: 1 / 3;
  justify-self: center;
  color: #a5a5a5;
`;

const AngleSlot = styled.label`
  grid-column: 2;
  justify-self: end;
  color: #c8c8c8;
`;

const Field = styled.input`
  width: 100%;
  height: 17px;
  padding-left: 4px;
  border: 1px solid #636363;
  background: #4b4b4b;
  color: #777;
`;

const Flips = styled.div`
  display: flex;
  grid-column: 4 / 6;
  justify-content: flex-end;
  gap: 13px;
  padding-right: 6px;
  color: #a0a0a0;
`;

const Combo = styled.span`
  display: flex;
  align-items: center;
  width: ${(p) => p.$w}px;
  height: 17px;
  border: 1px solid ${(p) => (p.$dim ? "#636363" : "#666")};
  border-radius: 2px;
  background: ${(p) => (p.$dim ? "#4b4b4b" : "#454545")};
  color: ${(p) => (p.$dim ? "#777" : "#f0f0f0")};
  input {
    flex: 1;
    width: 0;
    height: 100%;
    padding-left: ${(p) => (p.$dim ? 3 : 5)}px;
    border-right: 1px solid #636363;
  }
  button {
    display: grid;
    place-items: center;
    width: 14px;
    color: ${(p) => (p.$dim ? "#777" : "#c8c8c8")};
  }
`;

const AlignCaption = styled.div`
  padding-left: 9px;
  color: #d0d0d0;
`;

const AlignRow = styled.div`
  display: flex;
  gap: 17px;
  align-items: center;
  height: 40px;
  padding-left: 7px;
  div {
    display: flex;
  }
`;

const MoreRow = styled.div`
  display: flex;
  height: 20px;
  padding-left: 169px;
`;

const Actions = styled.div`
  display: flex;
  flex-direction: column;
  align-items: center;
  gap: 7px;
  width: 187px;
  margin: 3px 0 0 8px;
  a {
    margin-top: 3px;
    color: #d8d8d8;
    text-underline-offset: 2px;
  }
`;

const ActionButton = styled.button`
  width: 100%;
  height: 22px;
  border: 1px solid #616161;
  border-radius: 3px;
  background: #444;
  color: #f0f0f0;
`;

const LayerBar = styled.div`
  display: flex;
  align-items: center;
  height: ${(p) => p.$h}px;
  padding: ${(p) => p.$top || 0}px 0 0 3px;
  border-bottom: ${(p) => (p.$line ? 1 : 0)}px solid #3b3b3b;
  color: #d0d0d0;
`;

const FilterIcons = styled.div`
  display: flex;
  margin-left: 6px;
`;

const Toggle = styled.label`
  display: flex;
  justify-content: center;
  align-items: flex-start;
  width: 9px;
  height: 18px;
  margin: 0 0 3px 6px;
  border-radius: 5px;
  background: #3b3b3b;
  input {
    width: 9px;
    height: 9px;
    border-radius: 50%;
    background: #dcdcdc;
    appearance: none;
  }
`;

const BarLabel = styled.label`
  width: ${(p) => p.$w}px;
  padding-right: 4px;
  text-align: right;
  white-space: nowrap;
`;

const LayerArea = styled.div`
  display: flex;
  flex: 1;
  background: #4f4f4f;
`;

const LayerList = styled.div`
  flex: 1;
`;

const LayerRow = styled.div`
  display: flex;
  align-items: center;
  height: ${(p) => (p.$selected ? 27 : 22)}px;
  background: ${(p) => (p.$selected ? "#505050" : "#444")};
  color: #ececec;
`;

const LayerBody = styled.div`
  display: flex;
  flex: 1;
  align-items: center;
  height: 100%;
  gap: 8px;
  padding: 2px 0 0 ${(p) => (p.$selected ? 17 : 2)}px;
  background: ${(p) => (p.$selected ? "#6b6b6b" : "none")};
  font-weight: ${(p) => (p.$selected ? "normal" : "bold")};
`;

const Thumbnail = styled.svg`
  width: 36px;
  height: 22px;
`;

const PanelFooter = styled.div`
  display: flex;
  justify-content: flex-end;
  height: 26px;
  padding-right: 20px;
  border-top: 1px solid #3b3b3b;
`;

const Effects = styled.em`
  font: italic 600 13px/16px "Open Sans", sans-serif;
`;

/* ---------- taskbar ---------- */

const Taskbar = styled.footer`
  display: grid;
  grid-template-columns: 1fr auto 1fr;
  align-items: center;
  height: 47px;
  padding-left: 2px;
  background: #202020;
`;

const Apps = styled.div`
  display: flex;
  grid-column: 2;
`;

const AppButton = styled.button`
  display: grid;
  grid-template-rows: 1fr 3px;
  place-items: center;
  width: 44px;
  height: 41px;
  &::after {
    content: "";
    width: ${(p) => (p.$state === "active" ? 15 : p.$state === "wide" ? 13 : 6)}px;
    height: 3px;
    border-radius: 2px;
    background: ${(p) =>
      p.$state === "active" ? "#67c3f0" : p.$state ? "#9a9a9a" : "transparent"};
  }
`;

const ActiveApp = styled(AppButton)`
  width: 38px;
  margin: 0 3px;
  border-radius: 4px;
  background: #2f2f2f;
  box-shadow: 0 0 0 1px #353535;
`;

const Tray = styled.div`
  display: flex;
  justify-content: flex-end;
  align-items: center;
  padding-right: 20px;
  color: #f4f4f4;
  font: 12px/16px "Open Sans", sans-serif;
`;

const TrayCell = styled.span`
  display: grid;
  place-items: center;
  width: ${(p) => p.$w}px;
`;

const Clock = styled.div`
  width: 72px;
  text-align: right;
  font-size: 11px;
`;

const Notice = styled.span`
  display: grid;
  place-items: center;
  width: 16px;
  height: 16px;
  margin-left: 11px;
  border-radius: 50%;
  background: #60c8f8;
  color: #1c2a33;
  font-size: 10px;
`;

const menus = ["File", "Edit", "Image", "Layer", "Type", "Select", "Filter", "3D", "View", "Plugins", "Window", "Help"];

const tools = [
  ["Move", <Move />],
  ["Rectangular Marquee", <Marquee />],
  ["Lasso", <LassoTool />],
  ["Object Selection", <ObjectSelect />],
  ["Crop", <Crop />],
  ["Frame", <Frame />],
  ["Eyedropper", <FaEyeDropper size={15} />],
  ["Spot Healing Brush", <HealingBrush />],
  ["Brush", <Brush />],
  ["Clone Stamp", <FaStamp size={14} />],
  ["History Brush", <HistoryBrush />],
  ["Eraser", <FaEraser size={15} />],
  ["Gradient", <Gradient />],
  ["Blur", <FaTint size={14} />],
  ["Dodge", <Dodge />],
  ["Pen", <Pen />],
  ["Horizontal Type", <TypeTool />],
  ["Path Selection", <Arrow />],
  ["Rectangle", <RectTool />],
  ["Hand", <FaHandPaper size={16} />],
  ["Zoom", <Magnifier />],
  ["Edit Toolbar", <Dots />],
];

const ccRainbow = "conic-gradient(from 45deg, #b6e23c, #3fdc6c, #3f9bf5 40%, #b04df0 55%, #f02bb0 65%, #f0213c 80%, #ff8a1c 92%, #f5d020)";

const apps = [
  ["Start", <Windows />],
  ["Search", <Magnifier w={22} sw={1.8} fill="#444" />],
  ["Chrome", <Chrome />, "open"],
  ["Creative Cloud", <Badge $size={22} $bg={ccRainbow}><CloudLoops /></Badge>],
  ["Photoshop Beta", <Badge $size={22} $bg="#e9edf2" $fg="#2680d8">Ps</Badge>, "active"],
  ["Photoshop", <Badge $size={21} $bg="#001e36" $fg="#31a8ff">Ps</Badge>],
  ["Illustrator", <Badge $size={21} $bg="#330000" $fg="#ff9a00">Ai</Badge>, "open"],
  ["Lightroom Classic", <Badge $size={21} $bg="#001e36" $fg="#31a8ff">Lrc</Badge>],
  ["Bridge", <Badge $size={21} $bg="#000b1d" $fg="#ffffff">Br</Badge>],
  ["Premiere Pro", <Badge $size={21} $bg="#00005b" $fg="#9999ff">Pr</Badge>],
  ["After Effects", <Badge $size={21} $bg="#00005b" $fg="#9999ff">Ae</Badge>],
  ["Media Encoder", <Badge $size={21} $bg="#00005b" $fg="#9999ff">Me</Badge>],
  ["Instagram", <Instagram />],
  ["Messenger", <Messenger />],
  ["WhatsApp", <WhatsApp />],
  ["Spotify", <Spotify />, "open"],
  ["TeamViewer", <TeamViewer />],
  ["Peaks", <Peaks />, "open"],
  ["TickTick", <TickTick />],
  ["Podcast", <Podcast />],
  ["EA", <EaBase />],
  ["SHAREit", <ShareIt />],
  ["Music", <MusicNote />],
  ["File Explorer", <Explorer />, "open"],
  ["GeForce", <Nvidia />, "wide"],
];

const Options = () => (
  <OptionsBar>
    <Grip />
    <Cell $w={40} aria-label="Home"><Home /></Cell>
    <Rule />
    <Cell $w={22} aria-label="Move tool"><Move /></Cell>
    <Cell $w={18} aria-label="Tool presets"><ChevronDown /></Cell>
    <Rule />
    <Check $w={87}>
      <input type="checkbox" defaultChecked />
      Auto-Select:
    </Check>
    <TargetSlot>
      <Picker $w={54}>
        <select aria-label="Auto-select target"><option>Layer</option></select>
        <ChevronDown />
      </Picker>
    </TargetSlot>
    <Rule />
    <Check $w={143}>
      <input type="checkbox" />
      Show Transform Controls
    </Check>
    <Rule />
    <AlignGroup>
      <Cell aria-label="Align left"><AlignLeft /></Cell>
      <Cell aria-label="Align centers"><AlignCenter /></Cell>
      <Cell aria-label="Align right"><AlignRight /></Cell>
      <Cell $w={40} $dim aria-label="Distribute vertically"><SpreadV /></Cell>
    </AlignGroup>
    <Rule />
    <AlignGroup>
      <Cell aria-label="Align top"><AlignTop /></Cell>
      <Cell aria-label="Align middles"><AlignMiddle /></Cell>
      <Cell aria-label="Align bottom"><AlignBottom /></Cell>
      <Cell $w={40} $dim aria-label="Distribute horizontally"><SpreadH /></Cell>
    </AlignGroup>
    <Rule />
    <Cell $w={32} aria-label="More options"><Dots /></Cell>
    <Rule />
    <ModeLabel>3D Mode:</ModeLabel>
    <Cell $dim aria-label="Orbit"><Orbit3D /></Cell>
    <Cell $dim aria-label="Roll"><Roll3D /></Cell>
    <Cell $dim aria-label="Pan"><Pan3D /></Cell>
    <Cell $dim aria-label="Slide"><Slide3D /></Cell>
    <Cell $dim aria-label="Zoom camera"><Zoom3D /></Cell>
    <OptionsEnd>
      <Cell $w={38} aria-label="Beta"><Flask /></Cell>
      <ShareButton>Share</ShareButton>
      <Cell $w={32} aria-label="Search"><Magnifier /></Cell>
      <Cell $w={28} aria-label="Workspace"><Workspace /></Cell>
      <Cell $w={16} aria-label="Workspace menu"><ChevronDown /></Cell>
    </OptionsEnd>
  </OptionsBar>
);

const Toolbox = () => (
  <Column $w={39}>
    <Collapse $side="flex-start" aria-label="Expand tools"><Double /></Collapse>
    <Tools>
      <GripRow $h={10}><Grip $wide /></GripRow>
      <GripRow $h={6} />
      {tools.map(([name, icon], i) => (
        <ToolButton key={name} $active={i === 0} $plain={name === "Frame" || name === "Zoom"} aria-label={name}>
          {icon}
        </ToolButton>
      ))}
      <SwapRow>
        <Reset />
        <Swap />
      </SwapRow>
      <Swatches>
        <Swatch $front aria-label="Foreground color" />
        <Swatch aria-label="Background color" />
      </Swatches>
      <ToolButton $plain aria-label="Quick mask"><QuickMask /></ToolButton>
      <ToolButton aria-label="Screen mode"><ScreenMode /></ToolButton>
    </Tools>
  </Column>
);

const DocumentView = () => (
  <Document>
    <DocTabs>
      <DocTab>
        Untitled-1 @ 66.7% (Layer 1, RGB/8#)
        <Line w={7} h={7} sw={1}><path d="M.5.5l6 6M6.500.5l-6 6" /></Line>
      </DocTab>
    </DocTabs>
    <Stage>
      <Canvas>
        <ArtboardName>Artboard 1</ArtboardName>
        <Artboard />
        <ContextBar>
          <Handle />
          <ContextButton $w={122} $gap={4}><Person />Select subject</ContextButton>
          <ContextButton $w={158}><NoBackground />Remove background</ContextButton>
          <Cell $w={39} aria-label="Transform"><Warp /></Cell>
          <Cell $w={39} aria-label="Adjustment"><HalfCircle w={14} /></Cell>
          <Cell $w={38} aria-label="More"><Dots r={1.5} /></Cell>
        </ContextBar>
      </Canvas>
      <VScroll>
        <Line w={8} h={8} sw={1}><path d="M1 6l3-3 3 3" /></Line>
        <Track $before={274} $after={274}><Thumb $size={347} /></Track>
        <ChevronDown />
      </VScroll>
    </Stage>
    <StatusBar>
      <ZoomInput defaultValue="66.67%" aria-label="Zoom level" />
      <DocInfo>
        67.73 cm x 38.1 cm (72 ppi)
        <Line w={6} h={10} sw={1.2}><path d="M1 1l3.500 4L1 9" /></Line>
      </DocInfo>
      <HScroll>
        <Line w={8} h={8} sw={1}><path d="M5.500 1l-3 3 3 3" /></Line>
        <Track $across $before={402} $after={403}><Thumb $size={469} /></Track>
        <Line w={8} h={8} sw={1}><path d="M2.500 1l3 3-3 3" /></Line>
      </HScroll>
    </StatusBar>
  </Document>
);

const Dock = () => (
  <Column $w={37}>
    <Collapse aria-label="Expand dock"><Double left /></Collapse>
    <DockGroup>
      <GripRow $h={8}><Grip $wide /></GripRow>
      <Cell $h={28} aria-label="History"><History /></Cell>
      <Cell $h={28} aria-label="Actions"><Play /></Cell>
      <Cell $h={28} aria-label="Comments"><Comment /></Cell>
    </DockGroup>
    <DockGroup $grow>
      <GripRow $h={8}><Grip $wide /></GripRow>
      <Cell $h={28} aria-label="Character"><CharacterMark>A</CharacterMark></Cell>
      <Cell $h={28} aria-label="Paragraph"><FaParagraph size={15} /></Cell>
    </DockGroup>
  </Column>
);

const Properties = () => (
  <Panel>
    <TabRow>
      <Tab $active>Properties</Tab>
      <Tab>Adjustments</Tab>
      <Tab>Libraries</Tab>
      <TabFill><Burger /></TabFill>
    </TabRow>
    <KindRow>
      <KindIcon><Picture /></KindIcon>
      <KindName>Pixel Layer</KindName>
    </KindRow>
    <PanelBody>
      <Sections>
        <Section $h={117}>
          <SectionTitle><ChevronDown w={10} />Transform</SectionTitle>
          <TransformGrid>
            <LinkSlot><Chain /></LinkSlot>
            <label htmlFor="tw">W</label>
            <Field id="tw" defaultValue="0.14 cm" />
            <label htmlFor="tx">X</label>
            <Field id="tx" defaultValue="0 cm" />
            <label htmlFor="th">H</label>
            <Field id="th" defaultValue="0.14 cm" />
            <label htmlFor="ty">Y</label>
            <Field id="ty" defaultValue="0 cm" />
            <AngleSlot htmlFor="ta" aria-label="Angle"><Angle /></AngleSlot>
            <Combo $w={53} $dim>
              <input id="ta" defaultValue="0.00º" />
              <button aria-label="Angle presets"><ChevronDown /></button>
            </Combo>
            <Flips>
              <FlipH />
              <FlipV />
            </Flips>
          </TransformGrid>
        </Section>
        <Section $h={109}>
          <SectionTitle><ChevronDown w={10} />Align and Distribute</SectionTitle>
          <AlignCaption>Align:</AlignCaption>
          <AlignRow>
            <div>
              <Cell $w={29} aria-label="Align left edges"><AlignLeft /></Cell>
              <Cell $w={29} aria-label="Align horizontal centers"><AlignCenter /></Cell>
              <Cell $w={29} aria-label="Align right edges"><AlignRight /></Cell>
            </div>
            <div>
              <Cell $w={29} aria-label="Align top edges"><AlignTop /></Cell>
              <Cell $w={29} aria-label="Align vertical centers"><AlignMiddle /></Cell>
              <Cell $w={29} aria-label="Align bottom edges"><AlignBottom /></Cell>
            </div>
          </AlignRow>
          <MoreRow>
            <Cell $w={29} $h={20} aria-label="More align options"><Dots r={1.4} /></Cell>
          </MoreRow>
        </Section>
        <Section $h={153} $last>
          <SectionTitle><ChevronDown w={10} />Quick Actions</SectionTitle>
          <Actions>
            <ActionButton>Remove Background</ActionButton>
            <ActionButton>Select Subject</ActionButton>
            <a href="#more">View More</a>
          </Actions>
        </Section>
      </Sections>
      <Gutter $gap={26} />
    </PanelBody>
  </Panel>
);

const Layers = () => (
  <Panel $grow>
    <TabRow>
      <Tab $active>Layers</Tab>
      <Tab>Channels</Tab>
      <Tab>Paths</Tab>
      <TabFill><Burger /></TabFill>
    </TabRow>
    <LayerBar $h={32} $top={8} $line>
      <Picker $w={87} $pad={21}>
        <svg className="lead" width="10" height="10" viewBox="0 0 16 16" fill="none" stroke="currentColor" strokeWidth="2.4">
          <circle cx="6.5" cy="6.5" r="5" />
          <path d="M10 10l5 5" />
        </svg>
        <select aria-label="Filter kind"><option>Kind</option></select>
        <ChevronDown />
      </Picker>
      <FilterIcons>
        <Cell $w={24} $h={22} aria-label="Pixel layers"><Picture w={12} h={10} /></Cell>
        <Cell $w={24} $h={22} aria-label="Adjustment layers"><HalfCircle /></Cell>
        <Cell $w={24} $h={22} aria-label="Type layers"><TypeTool w={11} /></Cell>
        <Cell $w={24} $h={22} aria-label="Shape layers"><ShapeBox /></Cell>
        <Cell $w={24} $h={22} aria-label="Smart objects"><SmartDoc /></Cell>
      </FilterIcons>
      <Toggle aria-label="Filtering"><input type="checkbox" /></Toggle>
    </LayerBar>
    <LayerBar $h={28} $top={2} $line>
      <Picker $w={129}>
        <select aria-label="Blend mode"><option>Normal</option></select>
        <ChevronDown />
      </Picker>
      <BarLabel $w={47} htmlFor="opacity">Opacity:</BarLabel>
      <Combo $w={52}>
        <input id="opacity" defaultValue="100%" />
        <button aria-label="Opacity slider"><ChevronDown /></button>
      </Combo>
    </LayerBar>
    <LayerBar $h={30}>
      <BarLabel $w={30}>Lock:</BarLabel>
      <Cell $w={22} aria-label="Lock transparent pixels"><Checker /></Cell>
      <Cell $w={22} aria-label="Lock image pixels"><Brush w={13} /></Cell>
      <Cell $w={22} aria-label="Lock position"><Move w={14} /></Cell>
      <Cell $w={22} aria-label="Lock artboard"><ArtboardLock /></Cell>
      <Cell $w={22} aria-label="Lock all"><FaLock size={12} /></Cell>
      <BarLabel $w={36} htmlFor="fill">Fill:</BarLabel>
      <Combo $w={52}>
        <input id="fill" defaultValue="100%" />
        <button aria-label="Fill slider"><ChevronDown /></button>
      </Combo>
    </LayerBar>
    <LayerArea>
      <LayerList>
        <LayerRow>
          <Cell $w={31} $h={22} aria-label="Hide Artboard 1"><FaEye size={13} /></Cell>
          <LayerBody><ChevronDown w={10} />Artboard 1</LayerBody>
        </LayerRow>
        <LayerRow $selected>
          <Cell $w={31} $h={22} aria-label="Hide Layer 1"><FaEye size={13} /></Cell>
          <LayerBody $selected>
            <Thumbnail viewBox="0 0 36 22" aria-hidden="true">
              <defs>
                <pattern id="alpha" width="8" height="8" patternUnits="userSpaceOnUse">
                  <path d="M0 0h8v8H0z" fill="#e0dfe0" />
                  <path d="M0 0h4v4H0zM4 4h4v4H4z" fill="#c6c6c6" />
                </pattern>
              </defs>
              <path d="M2.500 2.500h31v17h-31z" fill="url(#alpha)" stroke="#333" />
              <path d="M.5 6V.5H12M24 .5h11.500V6M35.500 16v5.500H24M12 21.500H.5V16" fill="none" stroke="#fff" />
            </Thumbnail>
            Layer 1
          </LayerBody>
        </LayerRow>
      </LayerList>
      <Gutter />
    </LayerArea>
    <PanelFooter>
      <Cell $w={27} $dim aria-label="Link layers"><Chain side /></Cell>
      <Cell $w={27} $menu aria-label="Layer style"><Effects>fx</Effects></Cell>
      <Cell $w={27} aria-label="Add mask"><Mask /></Cell>
      <Cell $w={27} $menu aria-label="New adjustment layer"><HalfCircle /></Cell>
      <Cell $w={27} aria-label="New group"><FaFolder size={12} /></Cell>
      <Cell $w={27} aria-label="New layer"><PlusBox /></Cell>
      <Cell $w={27} aria-label="Delete layer"><Trash /></Cell>
    </PanelFooter>
  </Panel>
);

const SystemTaskbar = () => (
  <Taskbar>
    <Apps>
      {apps.map(([name, logo, state]) => {
        const Button = state === "active" ? ActiveApp : AppButton;
        return (
          <Button key={name} $state={state} aria-label={name}>{logo}</Button>
        );
      })}
    </Apps>
    <Tray>
      <TrayCell $w={32}><Line w={12} h={8} sw={1.6}><path d="M1 6.500L6 1.500l5 5" /></Line></TrayCell>
      <TrayCell $w={32}>
        <Line w={17} h={12} sw={1.2}>
          <path d="M.6.6h15.800v10.800H.6z" />
          <path d="M3 4h11M3 6h11" strokeDasharray="1.5 1" />
          <path d="M4.500 8.800h8" />
        </Line>
      </TrayCell>
      <TrayCell $w={44}>ENG</TrayCell>
      <TrayCell $w={32}>
        <Line w={16} h={13} sw={1.3}>
          <path d="M.8 5a10.500 10.500 0 0 1 14.400 0M3.200 7.600a7 7 0 0 1 9.600 0M5.500 10a3.700 3.700 0 0 1 5 0" />
          <circle cx="8" cy="11.5" r="1" fill="currentColor" />
        </Line>
      </TrayCell>
      <TrayCell $w={16}>
        <Line w={16} h={14} sw={1.2}>
          <path d="M1 5h2.500L7 2v10L3.500 9H1zM9 5c1 1 1 3 0 4M11 3c2 2 2 6 0 8" />
          <path d="M13 1.500c3 3 3 8 0 11" opacity=".4" />
        </Line>
      </TrayCell>
      <Clock>
        2:15 AM
        <br />
        8/31/2023
      </Clock>
      <Notice>2</Notice>
    </Tray>
  </Taskbar>
);

const App = () => (
  <Page>
    <GlobalStyle />
    <TitleBar>
      <Badge $size={16} $bg="#001e36" $fg="#31a8ff">Ps</Badge>
      <Menus>
        {menus.map((name) => (
          <MenuButton key={name}>{name}</MenuButton>
        ))}
      </Menus>
      <WindowButtons>
        <button aria-label="Minimize"><WinMinimize /></button>
        <button aria-label="Restore"><WinRestore /></button>
        <button aria-label="Close"><WinClose /></button>
      </WindowButtons>
    </TitleBar>
    <Options />
    <Workarea>
      <Toolbox />
      <DocumentView />
      <Dock />
      <Column $w={284}>
        <Collapse aria-label="Collapse panels"><Double /></Collapse>
        <Properties />
        <Layers />
      </Column>
    </Workarea>
    <SystemTaskbar />
  </Page>
);

export default App;
